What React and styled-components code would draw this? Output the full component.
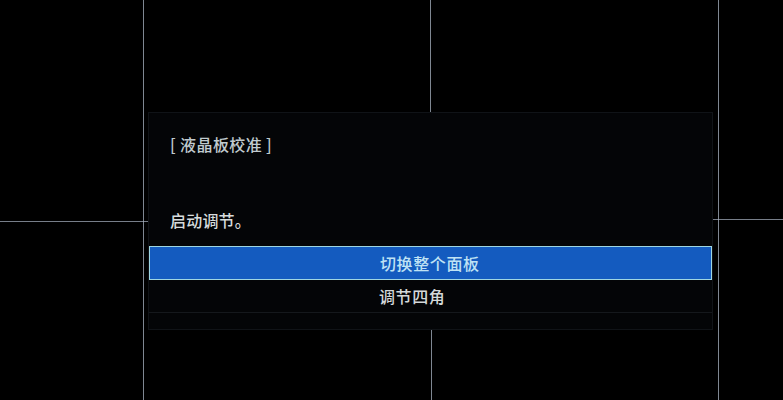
import styled, { createGlobalStyle } from 'styled-components'

const GlobalStyle = createGlobalStyle`
  html, body {
    margin: 0;
    padding: 0;
    background: #000;
  }
  body {
    font-family: "Noto Sans CJK SC", "Noto Sans", sans-serif;
  }
`

const Screen = styled.div`
  position: relative;
  width: 783px;
  height: 400px;
  background: #000;
  overflow: hidden;
  padding: 112px 0 0 148px;
  box-sizing: border-box;
`

// alignment pattern lines behind the dialog
const GuideV = styled.div`
  position: absolute;
  width: 1px;
  background: rgba(170, 180, 195, 0.75);
  left: ${(p) => p.x}px;
  top: ${(p) => p.top}px;
  bottom: ${(p) => p.bottom}px;
`
const GuideH = styled.div`
  position: absolute;
  height: 1px;
  background: rgba(170, 180, 195, 0.7);
  top: ${(p) => p.y}px;
  left: ${(p) => p.left}px;
  right: ${(p) => p.right}px;
`

const Panel = styled.div`
  position: relative;
  width: 565px;
  height: 218px;
  box-sizing: border-box;
  background: #040507;
  border: 1px solid #101317;
  display: flex;
  flex-direction: column;
`

const Header = styled.div`
  padding: 19px 21px 0;
  display: flex;
  flex-direction: column;
`

const Title = styled.div`
  font-size: 16px;
  font-weight: 500;
  line-height: 24px;
  letter-spacing: 0.4px;
  color: #c0cbcf;
`

const Message = styled.div`
  margin-top: 52px;
  margin-bottom: 14px;
  font-size: 16px;
  font-weight: 500;
  line-height: 24px;
  letter-spacing: 0.2px;
  color: #d6dbdc;
`

const Option = styled.div`
  height: ${(p) => (p.selected ? 34 : 33)}px;
  box-sizing: border-box;
  display: flex;
  align-items: center;
  padding-left: 230px;
  font-size: 16px;
  font-weight: 500;
  letter-spacing: 0.6px;
  color: ${(p) => (p.selected ? '#bfe2f4' : '#d4d9da')};
  background: ${(p) => (p.selected ? '#145bbf' : 'transparent')};
  border: ${(p) => (p.selected ? '1.5px solid #9fd6e2' : 'none')};
  border-bottom: ${(p) => (p.selected ? '1.5px solid #9fd6e2' : '1px solid #15181c')};
`

export default function App() {
  return (
    <>
      <GlobalStyle />
      <Screen>
        <GuideV x={143} top={0} bottom={0} />
        <GuideV x={430} top={0} bottom={288} />
        <GuideV x={431} top={330} bottom={0} />
        <GuideV x={718} top={0} bottom={0} />
        <GuideH y={221} left={0} right={635} />
        <GuideH y={219} left={713} right={0} />
        <Panel>
          <Header>
            <Title>[ 液晶板校准 ]</Title>
            <Message>启动调节。</Message>
          </Header>
          <Option selected>切换整个面板</Option>
          <Option>调节四角</Option>
        </Panel>
      </Screen>
    </>
  )
}
